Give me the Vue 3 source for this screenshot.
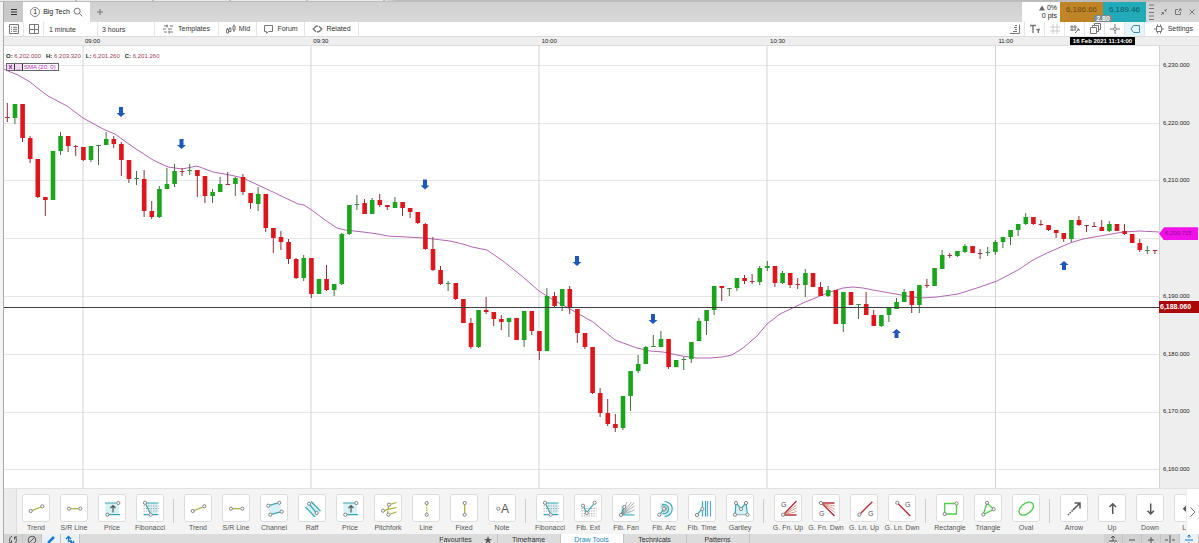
<script setup>
const candleRows = `117,118,103,122,r;104,118,104,124,g;104,138,104,142,r;138,159,136,163,r;159,197,159,198,r;197,200,197,216,r;151,200,151,200,g;136,151,132,155,g;136,146,136,152,r;146,147,145,156,r
147,160,147,161,r;146,160,146,162,g;145,146,145,165,g;139,145,132,145,g;139,144,136,148,r;144,160,142,176,r;160,179,160,183,r;178,179,171,185,g;179,211,170,217,r;211,217,201,219,r
189,217,186,218,g;184,189,168,189,g;171,184,164,187,g;171,172,168,176,r;170,171,164,175,g;170,176,170,197,r;176,196,176,203,r;192,196,189,203,g;184,192,177,192,g;184,185,172,185,r
178,184,177,196,g;177,192,174,195,r;193,203,193,209,r;194,204,187,211,g;194,228,194,232,r;228,238,228,253,r;237,242,231,250,r;242,259,239,264,r;259,278,258,279,r;258,278,255,281,g
258,294,258,298,r;279,294,279,294,g;279,290,265,291,r;284,290,284,296,g;234,284,233,285,g;205,234,205,235,g;204,205,195,210,g;203,214,199,214,r;200,214,198,214,g;200,205,194,207,r
205,207,205,210,r;202,208,197,208,g;202,208,202,216,r;208,212,208,218,r;212,223,212,224,r;224,249,223,250,r;249,270,237,271,r;270,284,266,285,r;283,284,281,291,g;283,299,283,300,r
299,323,299,323,r;323,347,318,349,r;310,347,310,348,g;310,312,297,314,r;312,319,312,326,r;319,322,315,330,r;318,322,318,337,g;318,340,318,340,r;311,340,311,347,g;311,331,311,335,r
331,351,331,360,r;296,351,288,351,g;296,306,292,307,r;289,306,289,311,g;289,308,286,314,r;309,333,309,343,r;333,347,333,349,r;347,393,347,394,r;393,413,388,417,r;413,424,399,426,r
424,428,414,432,r;396,428,396,430,g;371,396,371,411,g;364,371,355,373,g;347,364,346,364,g;346,347,335,347,g;339,347,331,347,g;339,367,339,369,r;360,367,360,367,g;359,360,357,370,g
342,359,342,363,g;321,341,318,341,g;310,321,310,335,g;286,310,286,315,g;286,288,286,301,r;288,289,288,296,g;278,288,278,291,g;278,281,275,284,r;281,282,274,284,r;268,282,266,285,g
266,268,261,271,g;266,283,266,287,r;273,283,271,284,g;273,285,273,288,r;284,285,278,289,r;273,285,269,297,g;273,287,273,287,r;287,296,282,296,r;290,296,286,297,g;290,324,290,324,r
292,324,292,332,g;292,305,292,305,r;304,305,304,319,g;304,315,292,315,r;315,326,310,326,r;315,326,315,327,g;308,315,308,322,g;302,309,298,309,g;292,302,289,302,g;291,305,291,313,r
285,305,285,313,g;285,286,279,288,r;268,286,268,286,g;255,269,250,269,g;255,256,253,258,r;251,256,251,257,g;246,252,244,253,g;246,253,246,253,r;253,254,249,259,r;252,253,247,256,g
242,252,240,255,g;237,242,237,248,g;230,237,230,245,g;224,230,224,236,g;217,224,213,225,g;217,224,217,225,r;224,225,220,226,r;225,230,225,231,r;230,233,230,238,r;233,239,233,242,r
220,239,220,242,g;220,225,216,226,r;225,226,225,232,r;226,227,222,227,r;227,231,220,231,r;224,231,221,232,g;224,231,224,231,r;231,234,224,235,r;234,243,234,243,r;243,250,239,252,r
250,251,246,254,g;250,251,250,254,r`
const candles = candleRows.split(/[;\n]/).map((row, i) => {
  const [top, bottom, high, low, kind] = row.split(',')
  return { x: 7.3 + i * 7.6, top: +top, bottom: +bottom, high: +high, low: +low, kind }
})

const sma = '4,69 8,71 18,75 30,82 40,90 48,96 67,106 83,118 105,130 115,134 133,147 153,160 168,167 182,169 197,166 213,172 230,175 243,178 258,185 273,192 298,204 304,205 313,211 325,220 337,228 345,230 363,232 378,234 388,236 425,238 450,241 463,244 472,247 487,250 503,261 523,277 539,291 550,298 570,309 593,322 615,340 637,348 650,351 663,352 682,356 697,358 710,358 722,357 732,355 743,348 757,336 767,324 780,314 803,303 820,296 833,291 843,288 853,287 863,288 873,290 907,296 920,298 937,297 958,294 980,287 997,281 1018,270 1033,260 1047,253 1070,243 1083,239 1100,236 1123,232 1140,231 1159,232'
const downArrows = [[121, 107], [181.5, 139], [425, 179.5], [577, 256], [653, 314]]
const upArrows = [[896.5, 338], [1064, 270]]
const times = ['09:00', '09:30', '10:00', '10:30', '11:00']
const prices = ['6,230.000', '6,220.000', '6,210.000', '6,200.000', '6,190.000', '6,180.000', '6,170.000', '6,160.000']
const ohlc = [['O:', '6,202.000'], ['H:', '6,203.320'], ['L:', '6,201.260'], ['C:', '6,201.260']]
const gridX = [83, 311, 539, 767, 995.5]
const gridY = [65.5, 123.5, 180.5, 238.5, 296.5, 354.5, 412.5, 469.5]

const trend = { name: 'Trend', p: [['olive', 'M9 15.5 18 12']], c: [[7.7, 16], [19.3, 11.3]] }
const srLine = { name: 'S/R Line', p: [['olive', 'M10 13.7H17.5']], c: [[8, 13.7], [19.3, 13.7]] }
const price = { name: 'Price', p: [['wash', 'M6.5 8H20V19.7H6.5Z'], ['teal', 'M6 8H17.5M10 19.7H21'], ['dark', 'M14 17.5V10.5M11.5 13 14 10.5 16.5 13']], c: [[19.3, 8], [8.3, 19.7]] }
const fib = { name: 'Fibonacci', p: [['wash', 'M8 8H21L21 19.7H14Z'], ['teal', 'M9.5 8H21.5M6.5 19.7H12M15.5 19.7H21.5M9 9.5 13 18'], ['dots', 'M6.5 11H21.5M6.5 13.5H21.5M6.5 16H21.5']], c: [[8, 7.8], [13.7, 19.7]] }
const groups = [
  [trend, srLine, price, fib],
  [trend, srLine,
    { name: 'Channel', p: [['wash', 'M7 11 19 8 20.5 16.7 9 19.7Z'], ['teal', 'M9 10.2 16.5 8.2M11 19.2 19 17.2']], c: [[7.3, 10.7], [18.3, 7.7], [9.3, 19.7], [20.7, 16.7]] },
    { name: 'Raff', p: [['wash', 'M7 11 13 6 22 16 16 22Z'], ['teal', 'M6.5 12 16 22M11 10 16.7 17M12 6.5 21.5 16']], c: [[10, 8.7], [17.7, 18]] },
    price,
    { name: 'Pitchfork', p: [['olive', 'M15.5 9.3 21.5 7.5M9.5 15.3 21.5 12.5M15.5 19 21.5 17M13.5 11 12.5 18']], c: [[14, 9.7], [8, 15.7], [13.5, 19.7]] },
    { name: 'Line', p: [['olive dash', 'M13.7 9.7V18']], c: [[13.7, 8], [13.7, 19.7]] },
    { name: 'Fixed', p: [['olive', 'M13.7 9.7V18']], c: [[13.7, 8], [13.7, 19.7]] },
    { name: 'Note', p: [], c: [[9.3, 13.7]], t: ['A', 12, 18, 'big'] }],
  [fib,
    { name: 'Fib. Ext', p: [['dots', 'M6.5 13.5H21.5M6.5 16H21.5M6.5 18.7H21.5M6.5 21H21.5'], ['teal', 'M9 12 11 16.7M12.7 16.5 18.7 9']], c: [[8, 10.7], [11.7, 18], [19.7, 7.7]] },
    { name: 'Fib. Fan', p: [['wash', 'M8 20 8 10 21 20Z'], ['teal', 'M8.5 18.5 10.5 13M9.7 20H21.5'], ['thin', 'M9 19 14 7M9 19 18.5 7M9.5 19 21.5 7.5M9.5 19 21.5 11M9.5 19.5 21.5 15']], c: [[8, 20], [11.3, 12]] },
    { name: 'Fib. Arc', p: [['wash', 'M9 8A9 7 0 0 1 15 21L9 19Z'], ['teal', 'M13.5 6.5C24 7 23.5 21 13.5 21.5M9.5 18.7 12 15'], ['teal', 'M11 10C13 8.7 17.5 10 17.5 14S14 19 11.5 18.5'], ['thin', 'M10 12C11 10 16 11 15.5 14S12 17 11.5 16']], c: [[8.3, 19.7], [13, 13.7]] },
    { name: 'Fib. Time', p: [['teal', 'M9 18.7 12 15M13.5 6V12M13.5 16V21.5M16.5 6V21.5'], ['blue', 'M18.5 6V21.5M21.5 6V21.5']], c: [[8, 20], [13.3, 14]] },
    { name: 'Gartley', p: [['wash', 'M8 20 9 8 14 14 19 8 20.5 20Z'], ['teal', 'M8.2 18 8.8 9.5M10 9.2 13 12.5M15 12.5 18 9.2M19.2 9.5 20.3 18'], ['thin', 'M9.5 19.7H19']], c: [[8, 19.7], [9, 8], [14, 14], [19, 8], [20.5, 19.7]] }],
  [{ name: 'G. Fn. Up', p: [['red', 'M9.3 18.7 21.5 6M9.5 20H21.5'], ['orange', 'M9.5 19 21.5 10M9.5 19.3 21.5 13M9.5 19.5 21.5 16.5']], c: [[8, 19.7]], t: ['G', 6, 12, 'small'] },
    { name: 'G. Fn. Dwn', p: [['red', 'M9.5 8H21.5M9.5 9 21.5 21'], ['orange', 'M9.5 8.5 21.5 11M9.5 8.5 21.5 14M9.5 8.5 21.5 17']], c: [[8, 8]], t: ['G', 6, 21, 'small'] },
    { name: 'G. Ln. Up', p: [['red', 'M9.5 18.5 21.3 6.7']], c: [[8.3, 19.7]], t: ['G', 17, 21, 'small'] },
    { name: 'G. Ln. Dwn', p: [['red', 'M9.5 9 21.3 21']], c: [[8.3, 7.8]], t: ['G', 16, 12, 'small'] }],
  [{ name: 'Rectangle', p: [['green', 'M7.7 8.5H19.5V19H7.7Z']], c: [[7.7, 19], [19.5, 8.5]] },
    { name: 'Triangle', p: [['green', 'M12 8 18.7 14.3 8.3 19.5Z']], c: [[12, 7.8], [18.7, 14.3], [8.3, 19.5]] },
    { name: 'Oval', p: [['green', 'M7 19C4.5 16 7.5 10.5 12 8.3S20 7.3 20.5 10.5 17 17.8 13.5 19.3 8.5 20.5 7 19Z']], c: [] }],
  [{ name: 'Arrow', p: [['arrow dash', 'M7 20 13 14'], ['arrow', 'M12 15 19 8M13.5 8H19V13.5']], c: [] },
    { name: 'Up', p: [['arrow', 'M13.7 19V9M10.5 12 13.7 8.8 17 12']], c: [] },
    { name: 'Down', p: [['arrow', 'M13.7 8.5V18.5M10.5 15.7 13.7 18.9 17 15.7']], c: [] },
    { name: 'Left', p: [['arrow', 'M19 13.7H9M12 10.5 8.8 13.7 12 17']], c: [] }],
]
const chartTools = [
  { name: 'Grid', d: 'M4 1V11M8 1V11M1 4H11M1 8H11', soft: true },
  { name: 'Drawing', d: 'M3 2V8M6 2V7M1 4H8M1 7H7M6 10 10 6M8 6H10V8' },
  { name: 'Layers', d: 'M1.5 4.5H7.5V10.5H1.5ZM3.5 4.5V2.5H9.5V8.5H7.5M5.5 2.5V.5H11.5V6.5H9.5' },
  { name: 'Candle', d: 'M1 6H4.5M7.5 6H11M6 1V3M6 9V11M6 3.5 7.5 6 6 8.5 4.5 6Z' },
  { name: 'Tag', d: 'M2 6 4.5 2.5H10.5V9.5H4.5Z', active: true },
]
const tabs = ['Favourites', 'Timeframe', 'Draw Tools', 'Technicals', 'Patterns']
const zooms = [
  { name: 'Fit', d: 'M2 10H10M6 2V7M4 4 6 2 8 4M2 7H10' },
  { name: 'Zoom out', d: 'M3 6H9' },
  { name: 'Zoom in', d: 'M3 6H9M6 3V9' },
  { name: 'Spread', d: 'M1 6H4M8 6H11M6 1V11' },
  { name: 'Centre', d: 'M2 6H10M6 1V4M6 8V11M4.5 2.5 6 1 7.5 2.5M4.5 9.5 6 11 7.5 9.5', active: true },
]
</script>

<template>
  <div class="app">
    <div class="windowstrip"><i v-for="n in 5" :key="n"></i></div>
    <div class="panel">
      <header class="tabbar">
        <button class="menu" aria-label="Menu"><svg width="12" height="12"><path d="M3 3.5H9M3 6H9M3 8.5H9" /></svg></button>
        <button class="doc">
          <span class="num">1</span>Big Tech
          <svg width="10" height="10" viewBox="0 0 10 10"><circle cx="4.2" cy="4.2" r="3" /><path d="M6.5 6.5 9.3 9.3" /></svg>
        </button>
        <button class="add" aria-label="New tab"><svg width="8" height="8"><path d="M4 1V7M1 4H7" /></svg></button>
        <div class="change"><span><svg width="6" height="6"><path d="M0 5.5 3 .5 6 5.5Z" /></svg> 0%</span><span>0 pts</span></div>
        <div class="quote">
          <button class="sell">6,186.66</button><button class="buy">6,189.46</button>
          <span class="spread">2.80</span>
        </div>
        <div class="win">
          <svg class="levels" width="8" height="18"><path d="M1 2H6M1 5.5H6M1 9.5H6M1 13H6M1 16.5H6" /></svg>
          <button aria-label="Shrink"><svg width="8" height="8"><path d="M1 7 3.5 4.5M1.5 4.5H3.5V6.5M7 1 5 3M5 1.5V3H6.5" /></svg></button>
          <button aria-label="Pop out"><svg width="8" height="8"><path d="M4 1.5H1.5V6.5H6.5V4M4 4 7 1M5 1H7V3" /></svg></button>
          <button aria-label="Close"><svg width="8" height="8"><path d="M1.5 1.5 6.5 6.5M6.5 1.5 1.5 6.5" /></svg></button>
        </div>
      </header>

      <div class="toolbar">
        <button class="sq" aria-label="List"><svg width="12" height="12"><path d="M1.5 1.5H10.5V10.5H1.5ZM3 4.3H4M5 4.3H9M3 6.3H4M5 6.3H9M3 8.3H4M5 8.3H9" /></svg></button>
        <button class="sq" aria-label="Layout"><svg width="12" height="12"><path d="M1.5 1.5H10.5V10.5H1.5ZM6.5 1V11M1 6.5H11" /></svg></button>
        <select class="pick first" aria-label="Interval"><option>1 minute</option></select>
        <select class="pick" aria-label="Range"><option>3 hours</option></select>
        <button class="txt templates"><svg width="11" height="10"><path d="M1 2H5M7 2H10M0 5H3M5 5H9M1 8H4M6 8H10M4 .5V3.5M6 6.5V9.5" /></svg>Templates</button>
        <button class="txt"><svg width="11" height="10"><path d="M1.5 5.5H3.5V9H1.5ZM2.5 4V5.5M5 3V4.5M4 4.5H6V7.5H4ZM9 .5V2M8 2H10V6H8ZM9 6V8" /></svg>Mid</button>
        <button class="txt forum"><svg width="11" height="10"><path d="M1.5 1.5H9.5V7.5H5.5L3.5 9.5V7.5H1.5Z" /></svg>Forum</button>
        <button class="txt related"><svg width="11" height="10"><path class="bold" d="M4 2.2 1.2 5 4 7.8M7 2.2 9.8 5 7 7.8M4 2.2H6M5 7.8H7" /></svg>Related</button>
        <span class="gap"></span>
        <button class="tool" aria-label="Depth"><svg width="12" height="12"><path d="M1 10.5H10.5V1.5M4 8.5H8M6 6.5H8M5 4.5H8M6 2.5H8" /></svg></button>
        <button class="tool" aria-label="Text size"><svg width="12" height="12"><path class="bold" d="M1 2.5H7M4 2.5V10M7.5 6.5H11M9.3 6.5V10" /></svg></button>
        <button v-for="t in chartTools" :key="t.name" class="tool" :class="{ on: t.active, soft: t.soft }" :aria-label="t.name"><svg width="12" height="12"><path :d="t.d" /></svg></button>
        <button class="settings"><svg width="10" height="10"><path d="M2.5 2.5H7.5V7.5H2.5ZM0 5H2.5M7.5 5H10M3.5 .5V2.5M6.5 .5V2.5M3.5 7.5V9.5M6.5 7.5V9.5" /></svg>Settings</button>
      </div>

      <div class="timeaxis">
        <span v-for="t in times" :key="t">{{ t }}</span>
        <b class="now">16 Feb 2021 11:14:00</b>
      </div>

      <main class="chart">
        <div class="plot">
          <svg class="canvas" viewBox="4 46 1155 442" preserveAspectRatio="none">
            <path v-for="y in gridY" :key="y" class="gridh" :d="`M4 ${y}H1159`" />
            <path v-for="x in gridX" :key="x" class="gridv" :d="`M${x} 46V488`" />
            <polyline class="sma" :points="sma" />
            <g v-for="(c, i) in candles" :key="i" :class="c.kind">
              <rect class="wick" :x="c.x - 0.5" :y="c.high" width="1" :height="c.low - c.high" />
              <rect class="body" :class="{ flat: c.bottom - c.top < 2 }" :x="c.x - 2.2" :y="c.top" width="4.6" :height="c.bottom - c.top" />
            </g>
            <path class="level" d="M4 307.5H1159" />
            <path v-for="(a, i) in downArrows" :key="'d' + i" class="mark" :d="`M${a[0] - 2} ${a[1]}h4v6h2.5l-4.5 4l-4.5 -4h2.5z`" />
            <path v-for="(a, i) in upArrows" :key="'u' + i" class="mark" :d="`M${a[0] - 2} ${a[1]}h4v-5h2.5l-4.5 -4l-4.5 4h2.5z`" />
          </svg>
          <div class="legend">
            <p><span v-for="o in ohlc" :key="o[0]"><b>{{ o[0] }}</b> {{ o[1] }}</span></p>
            <div class="study"><button aria-label="Remove">x</button><button aria-label="Minimise">_</button><span>SMA (20, 0)</span></div>
          </div>
        </div>
        <aside class="priceaxis">
          <span v-for="p in prices" :key="p">{{ p }}</span>
          <b class="smatag">6,200.715</b>
          <b class="last">6,188.060</b>
        </aside>
      </main>

      <section class="tools">
        <div class="handle"></div>
        <div class="strip">
          <div v-for="(g, gi) in groups" :key="gi" class="group">
            <button v-for="t in g" :key="t.name" class="draw">
              <span class="tile">
                <svg width="27" height="27" viewBox="0 0 27 27">
                  <path v-for="(p, i) in t.p" :key="i" :class="p[0]" :d="p[1]" />
                  <circle v-for="(c, i) in t.c" :key="'c' + i" :cx="c[0]" :cy="c[1]" r="1.6" />
                  <text v-if="t.t" :x="t.t[1]" :y="t.t[2]" :class="t.t[3]">{{ t.t[0] }}</text>
                </svg>
              </span>
              <span>{{ t.name }}</span>
            </button>
          </div>
        </div>
        <button class="next" aria-label="More tools"><svg width="8" height="12"><path d="M1.5 1.5 6 6 1.5 10.5" /></svg></button>
      </section>

      <footer class="bottom">
        <div class="left">
          <button aria-label="Reset"><svg width="12" height="12"><path d="M5 2.2A4 4 0 0 0 4 9M2 9H4.5V6.5M7 9.8A4 4 0 0 0 8 3M10 3H7.5V5.5" /></svg></button>
          <button aria-label="Clear"><svg width="12" height="12"><circle cx="6" cy="6" r="3.8" /><path d="M3.3 8.7 8.7 3.3" /></svg></button>
          <button class="on" aria-label="Pen"><svg width="12" height="12"><path class="heavy" d="M3 9 9 3" /></svg></button>
          <button class="on" aria-label="Magnet"><svg width="12" height="12"><path class="bold" d="M2 5 4.5 2.5 7 5M4.5 3V7H8M6 7 8 9.5 10 7" /></svg></button>
        </div>
        <nav>
          <button v-for="t in tabs" :key="t" :class="{ current: t === 'Draw Tools' }">{{ t }}<svg v-if="t === 'Favourites'" width="8" height="8"><path d="M4 0 5 3H8L5.6 4.8 6.5 8 4 6 1.5 8 2.4 4.8 0 3H3Z" /></svg></button>
        </nav>
        <div class="right">
          <button v-for="z in zooms" :key="z.name" :class="{ on: z.active }" :aria-label="z.name"><svg width="12" height="12"><path :d="z.d" /></svg></button>
        </div>
      </footer>
    </div>
  </div>
</template>

<style>
body { background: #f4f4f4; }
</style>

<style scoped>
.app { height: 100vh; display: flex; flex-direction: column; overflow: hidden; font: 7px/10px "Liberation Sans", Arial, sans-serif; color: #333; }
.app * { box-sizing: border-box; }
button, select { font: inherit; color: inherit; background: none; border: 0; border-radius: 0; padding: 0; margin: 0; display: flex; align-items: center; justify-content: center; white-space: nowrap; }
svg { flex: none; display: block; fill: none; stroke: #777; }
.windowstrip { flex: none; height: 2px; background: linear-gradient(90deg, #e9e9e9 32%, #bbb 33%); display: flex; border-bottom: 1px solid #bdbdbd; }
.windowstrip i { width: 77px; border-right: 2px solid #bbb; }
.panel { flex: 1; min-height: 0; margin-left: 3px; border-left: 1px solid #aaa; display: flex; flex-direction: column; }

.tabbar { flex: none; height: 20px; display: flex; background: linear-gradient(#cfcfcf, #d9d9d9); }
.menu { width: 19px; background: #c9c9c9; }
.menu svg { stroke: #333; }
.doc { width: 67px; background: #fff; gap: 3px; color: #222; }
.num { width: 10px; height: 10px; border: 1px solid #888; border-radius: 50%; line-height: 8px; text-align: center; }
.add { width: 20px; }
.change { margin-left: auto; width: 38px; background: #fff; padding-right: 3px; display: flex; flex-direction: column; align-items: flex-end; justify-content: center; line-height: 8px; color: #222; }
.change span { display: flex; gap: 2px; align-items: center; }
.change svg { fill: #666; stroke: none; }
.quote { position: relative; display: flex; font-size: 8px; }
.quote button { width: 43px; padding-bottom: 5px; }
.sell { background: #bf8426; color: #6b4a14; }
.buy { background: #22aab8; color: #0d5a66; }
.spread { position: absolute; left: 34px; bottom: 0; width: 18px; background: #7e8a8a; color: #fff; font-size: 7px; font-weight: bold; line-height: 7px; text-align: center; }
.win { width: 53px; display: flex; align-items: center; gap: 6px; padding-left: 2px; }
.win .levels { margin-right: -2px; }

.toolbar { flex: none; height: 14px; background: #fff; display: flex; padding-right: 6px; }
.toolbar button, .toolbar select { border-right: 1px solid #e6e6e6; }
.sq { width: 20px; }
.pick { appearance: none; width: 57px; padding-left: 4px; line-height: 13px; }
.pick.first { width: 54px; padding-left: 5px; }
.txt { gap: 3px; width: 38px; }
.txt.templates { width: 64px; gap: 4px; }
.txt.forum { width: 48px; }
.txt.related { width: 54px; }
.bold { stroke-width: 1.4; }
.gap { flex: 1; }
.toolbar .tool { width: 20px; }
.tool.soft svg { stroke: #ccc; }
.tool.on { background: #e6f5fb; }
.tool.on svg { stroke: #3c8fb5; }
.toolbar .settings { width: 48px; gap: 4px; border: 0; justify-content: flex-end; }

.timeaxis { flex: none; height: 10px; background: #eee; border-top: 1px solid #ddd; border-bottom: 1px solid #ddd; position: relative; display: flex; padding-left: 81px; font-size: 6px; line-height: 9px; color: #222; }
.timeaxis span { flex: none; width: 20.5%; }
.now { position: absolute; right: 64px; top: 0; width: 65px; background: #000; color: #fff; line-height: 8px; text-align: center; }

.chart { flex: 1; min-height: 0; display: flex; background: #fff; }
.plot { flex: 1; position: relative; min-width: 0; }
.canvas { width: 100%; height: 100%; stroke: none; }
.gridh { stroke: #e6e6e6; }
.gridv { stroke: #d4d4d4; }
.sma { stroke: #b565b5; stroke-width: 1; }
.level { stroke: #3e3e3e; }
.mark { fill: #1d59bd; }
.g .body { fill: #1ca51c; }
.r .body { fill: #dd161b; }
.g .wick { fill: #427042; }
.r .wick { fill: #8c3038; }
.g .flat { fill: #3f8a44; }
.r .flat { fill: #a63242; }
.legend { position: absolute; left: 2px; top: 6px; font-size: 6px; line-height: 8px; }
.legend p { margin: 0 0 3px; display: flex; gap: 5px; white-space: nowrap; color: #a33a55; }
.legend b { color: #222; }
.study { display: flex; width: 53px; height: 8px; border: 1px solid #666; color: #c026c0; line-height: 6px; white-space: nowrap; }
.study button { width: 8px; border-right: 1px solid #333; background: #f3d9f6; color: #8b1fa0; font-size: 7px; font-weight: bold; }
.study span { padding-left: 1px; }
.priceaxis { position: relative; width: 40px; background: #eee; border-left: 1px solid #d4d4d4; display: flex; flex-direction: column; justify-content: space-between; padding: 16px 0 16px 3px; font-size: 6px; line-height: 6px; color: #222; }
.smatag { position: absolute; left: -1px; top: 41%; width: 39px; height: 13px; background: #f012e8; color: #8d0b90; font-weight: normal; line-height: 13px; padding-left: 6px; clip-path: polygon(0 50%, 5px 0, 100% 0, 100% 100%, 5px 100%); }
.last { position: absolute; left: -1px; right: 0; top: 255px; height: 12px; background: #a90808; color: #fff; line-height: 12px; padding-left: 1px; font-size: 7px; }

.tools { flex: none; height: 46px; display: flex; background: #f4f4f4; border-top: 1px solid #e2e2e2; }
.handle { flex: none; width: 13px; background: #ececec; border-right: 1px solid #ddd; }
.strip { flex: 1; min-width: 0; display: flex; overflow: hidden; padding-top: 5px; }
.group { flex: none; display: flex; }
.group + .group { margin-left: 4px; padding-left: 6px; background: linear-gradient(#ccc, #ccc) no-repeat 0 5px / 1px 24px; }
.draw { width: 38px; flex-direction: column; justify-content: flex-start; gap: 1px; color: #555; }
.tile { width: 28px; height: 28px; border: 1px solid #ddd; border-radius: 3px; background: #fff; display: flex; align-items: center; justify-content: center; }
.tile circle { fill: #fff; stroke: #777; stroke-width: .9; }
.tile text { stroke: none; fill: #555; }
.tile .big { font-size: 12px; }
.tile .small { font-size: 7px; }
.olive { stroke: #a5ad2c; stroke-width: 1.2; }
.teal { stroke: #35a7b5; stroke-width: 1.2; }
.blue { stroke: #5aa9d8; stroke-width: 1.2; }
.wash { stroke: none; fill: #d5f1f5; }
.dark { stroke: #555; stroke-width: 1.2; }
.thin { stroke: #777; stroke-width: .6; }
.dots { stroke: #888; stroke-width: .8; stroke-dasharray: 1.2 1.2; }
.dash { stroke-dasharray: 1.5 1; }
.red { stroke: #b5303e; stroke-width: 1.4; }
.orange { stroke: #c9735a; stroke-width: .7; }
.green { stroke: #4ccb4c; stroke-width: 1.3; }
.arrow { stroke: #555; stroke-width: 1.5; }
.next { flex: none; width: 13px; background: #fff; border-left: 1px solid #eee; }

.bottom { flex: none; height: 9px; display: flex; justify-content: space-between; align-items: flex-start; background: #dcdcdc; overflow: hidden; color: #333; }
.bottom button { height: 12px; border-right: 1px solid #c4c4c4; }
.left, .right, nav { display: flex; }
.left button { width: 19px; background: #d2d2d2; }
.right button { width: 19px; background: #d2d2d2; }
.bottom svg { stroke: #555; }
nav button { width: 63px; gap: 12px; }
.bottom nav .current { background: #fff; color: #1787b8; }
.bottom nav svg { fill: #555; stroke: none; }
.bottom .on { background: #eaf2f8; }
.bottom .on svg { stroke: #1b78c4; }
.heavy { stroke-width: 2.5; }
</style>
